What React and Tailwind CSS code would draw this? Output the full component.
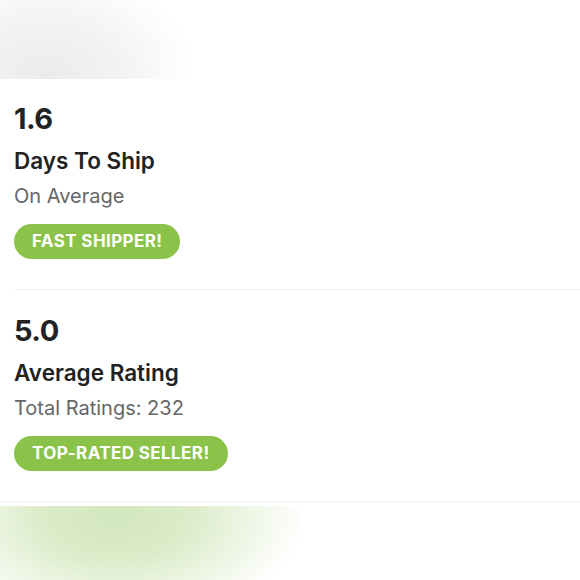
import React from 'react';

const stats = [
  { value: '1.6', title: 'Days To Ship', sub: 'On Average', badge: 'FAST SHIPPER!' },
  { value: '5.0', title: 'Average Rating', sub: 'Total Ratings: 232', badge: 'TOP-RATED SELLER!' },
];

const App = () => {
  return (
    <div className="w-[580px] h-[580px] overflow-hidden bg-white flex flex-col" style={{ fontFamily: 'Inter, "Open Sans", sans-serif' }}>
      {/* blurred image strip at the top */}
      <div className="h-[79px] shrink-0 bg-[radial-gradient(ellipse_150px_110px_at_45px_75px,#ebebeb_0%,#f3f3f3_50%,#ffffff_100%)]" />

      <div className="pl-[14px] pt-[22px]">
        {stats.map((s, i) => (
          <div key={s.value} className={i === 0 ? 'pb-[30px] border-b border-[#ececec]' : 'pt-[23px] pb-[28px]'}>
            <div className="text-[29px] leading-[36px] font-bold text-[#222] tracking-[-0.5px]">{s.value}</div>
            <div className="mt-[10px] text-[22.5px] leading-[28px] font-semibold text-[#222]">{s.title}</div>
            <div className="mt-[9px] text-[20px] leading-[24px] text-[#666]">{s.sub}</div>
            <div className="mt-[16px] inline-flex h-[35px] items-center rounded-full bg-[#8bc34a] px-[18px] text-[17px] font-bold tracking-[0.4px] text-white">
              {s.badge}
            </div>
          </div>
        ))}
      </div>

      {/* footer divider + blurred green strip */}
      <div className="mt-auto border-t border-[#f1f1f1] pt-[4px]">
        <div className="h-[74px] bg-[radial-gradient(ellipse_190px_110px_at_115px_10px,#d2e7bd_0%,#dcecca_40%,#ffffff_100%)]" />
      </div>
    </div>
  );
};

export default App;
